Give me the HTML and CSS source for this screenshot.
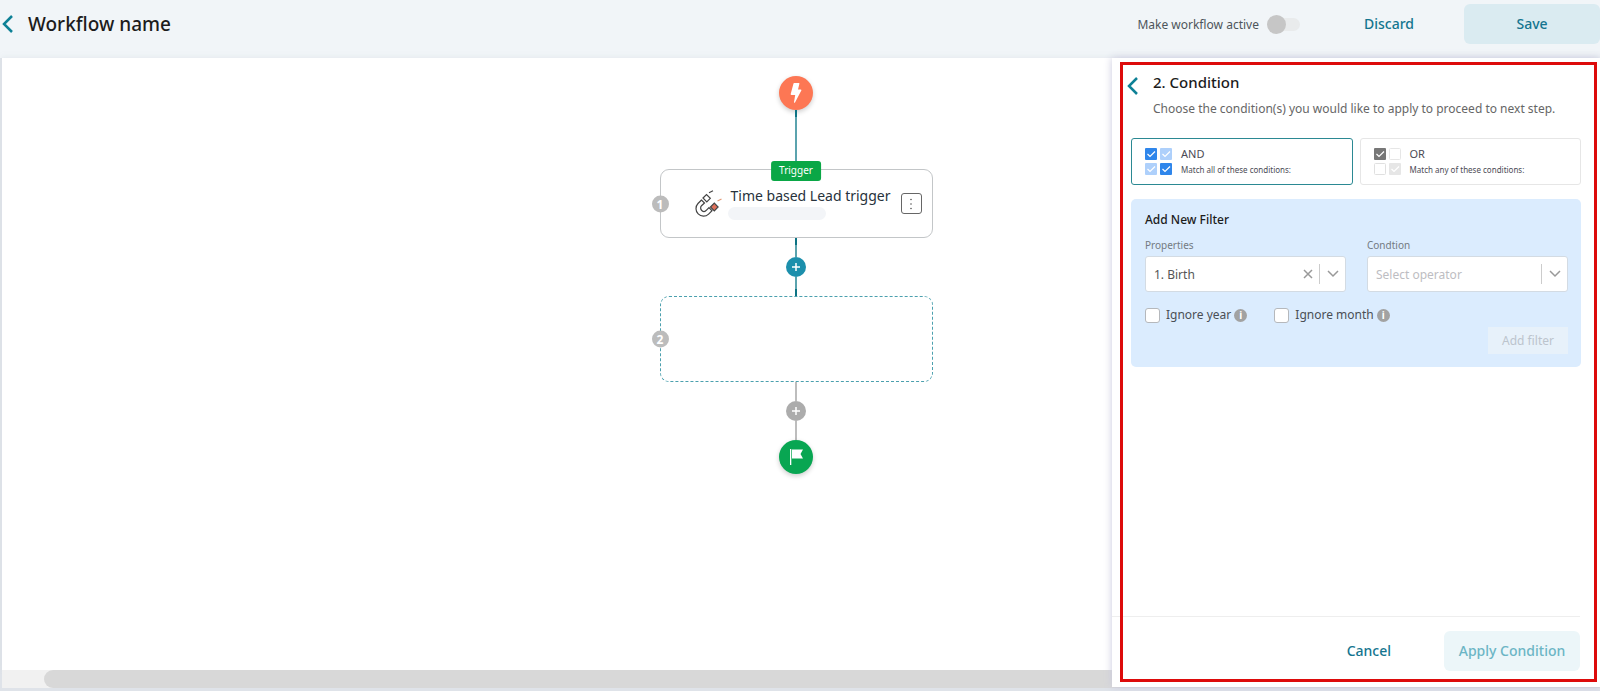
FILE: index.html
```html
<!DOCTYPE html>
<html lang="en">
<head>
<meta charset="utf-8">
<title>Workflow name</title>
<link rel="stylesheet" href="styles.css">
</head>
<body>
<header class="topbar">
  <button class="back" aria-label="Back"><svg width="12" height="18" viewBox="0 0 12 18"><path d="M10 1 2 9l8 8"/></svg></button>
  <h1 class="topbar-title">Workflow name</h1>
  <label class="switch">Make workflow active<input type="checkbox" role="switch"></label>
  <button class="btn btn-text discard">Discard</button>
  <button class="btn btn-soft save">Save</button>
</header>
<main class="workspace">
  <section class="canvas">
    <div class="flow">
      <div class="node node-start"><svg width="12" height="20" viewBox="0 0 12 20"><path fill="#fff" d="M3.500.5Q3.600 0 4.200 0h4.600q.8 0 .6.800L8 6.500h2.800q1 0 .5 1L5 19.500q-.7.800-1-.3L5.200 12H1.500q-.9 0-.8-1z"/></svg></div>
      <div class="line line-long"></div>
      <article class="card">
        <span class="tag">Trigger</span>
        <span class="step">1</span>
        <svg class="magnet" width="28" height="28" viewBox="0 0 28 28" fill="none" stroke="#444" stroke-width="1.200">
          <path d="M7.500 10 4 13.500a7.500 7.500 0 0 0 10.600 10.600l3.400-3.300-3-3.100-2.500 2.500a3.200 3.200 0 0 1-5-4.500l3-2.700z"/>
          <path d="m9 8 3.500-3.500 3.800 3.800-3.500 3.500z"/>
          <path fill="#e0705a" d="m16.500 17 3.800-3.800 3.800 3.800-3.800 3.800z"/>
          <path d="m15 2.800 4-2"/><path stroke="#e39a78" d="m23.500 11 4-2"/>
        </svg>
        <div class="card-text">
          <h2 class="card-title">Time based Lead trigger</h2>
          <div class="card-placeholder"></div>
        </div>
        <button class="kebab" aria-label="More"><svg width="4" height="14" viewBox="0 0 4 14" fill="#555"><circle cx="2" cy="2.500" r=".8"/><circle cx="2" cy="7" r=".8"/><circle cx="2" cy="11.500" r=".8"/></svg></button>
      </article>
      <div class="line"></div>
      <button class="plus" aria-label="Add step"><svg width="10" height="10" viewBox="0 0 10 10"><path d="M5 1v8M1 5h8"/></svg></button>
      <div class="line line-up"></div>
      <article class="card card-empty"><span class="step">2</span></article>
      <div class="line line-off"></div>
      <button class="plus plus-off" aria-label="Add step"><svg width="10" height="10" viewBox="0 0 10 10"><path d="M5 1v8M1 5h8"/></svg></button>
      <div class="line line-off"></div>
      <div class="node node-end"><svg width="14" height="16" viewBox="0 0 14 16"><path fill="#fff" d="M1 0h1.300v16H1zM3 .5h11L11.500 5 14 9.500H3z"/></svg></div>
    </div>
  </section>
  <div class="scrollbar"><div class="scroll-thumb"></div></div>

  <aside class="panel">
    <div class="panel-head">
      <button class="back" aria-label="Back"><svg width="12" height="18" viewBox="0 0 12 18"><path d="M10 1 2 9l8 8"/></svg></button>
      <div>
        <h2 class="panel-title">2. Condition</h2>
        <p class="panel-sub">Choose the condition(s) you would like to apply to proceed to next step.</p>
      </div>
    </div>
    <div class="modes">
      <button class="mode mode-on">
        <svg width="28" height="28" viewBox="0 0 28 28" fill="none">
          <rect width="12" height="12" rx="1" fill="#2f86eb"/><rect x="15" width="12" height="12" rx="1" fill="#aed0fb"/>
          <rect y="15" width="12" height="12" rx="1" fill="#aed0fb"/><rect x="15" y="15" width="12" height="12" rx="1" fill="#2f86eb"/>
          <path stroke="#fff" stroke-width="1.200" d="m2.500 6 2.500 2.500 5-5M17.500 6 20 8.500l5-5M2.500 21 5 23.500l5-5M17.500 21l2.500 2.500 5-5"/>
        </svg>
        <span class="mode-text"><span class="mode-name">AND</span><span class="mode-note">Match all of these conditions:</span></span>
      </button>
      <button class="mode">
        <svg width="28" height="28" viewBox="0 0 28 28" fill="none">
          <rect width="12" height="12" rx="1" fill="#777"/><rect x="15.500" y=".5" width="11" height="11" rx="1" stroke="#e6e6e6"/>
          <rect x=".5" y="15.500" width="11" height="11" rx="1" stroke="#e0e0e0"/><rect x="15" y="15" width="12" height="12" rx="1" fill="#e6e6e6"/>
          <path stroke="#fff" stroke-width="1.200" d="m2.500 6 2.500 2.500 5-5M17.500 21l2.500 2.500 5-5"/>
        </svg>
        <span class="mode-text"><span class="mode-name">OR</span><span class="mode-note">Match any of these conditions:</span></span>
      </button>
    </div>
    <section class="filter">
      <h3 class="filter-title">Add New Filter</h3>
      <div class="fields">
        <div class="field">
          <label class="field-label" for="prop">Properties</label>
          <div class="select">
            <select id="prop"><option>1. Birth</option></select>
            <button class="clear" aria-label="Clear"><svg width="10" height="10" viewBox="0 0 10 10"><path d="m1 1 8 8M9 1 1 9"/></svg></button>
            <span class="chevron"><svg width="12" height="8" viewBox="0 0 12 8"><path d="m1 1 5 5 5-5"/></svg></span>
          </div>
        </div>
        <div class="field">
          <label class="field-label" for="cond">Condtion</label>
          <div class="select select-blank">
            <select id="cond"><option>Select operator</option></select>
            <span class="chevron"><svg width="12" height="8" viewBox="0 0 12 8"><path d="m1 1 5 5 5-5"/></svg></span>
          </div>
        </div>
      </div>
      <div class="checks">
        <label class="check"><input type="checkbox">Ignore year<span class="info">i</span></label>
        <label class="check"><input type="checkbox">Ignore month<span class="info">i</span></label>
      </div>
      <button class="add-filter" disabled>Add filter</button>
    </section>
    <footer class="panel-foot">
      <button class="btn btn-text">Cancel</button>
      <button class="btn btn-soft apply" disabled>Apply Condition</button>
    </footer>
  </aside>
</main>
</body>
</html>
```
FILE: styles.css
```css
* { box-sizing: border-box; }
body {
  margin: 0;
  min-height: 100vh;
  display: flex;
  flex-direction: column;
  background: #f1f5f8;
  color: #222;
  font-family: "Noto Sans", sans-serif;
}
h1, h2, h3, p { margin: 0; font-weight: 400; }
button, input, select { font: inherit; color: inherit; margin: 0; }
button { border: 0; padding: 0; background: none; }
svg { display: block; }

.topbar { display: flex; align-items: center; height: 58px; padding-bottom: 10px; }
.back { flex: none; padding: 0 2px; }
.back path { fill: none; stroke: #0e8196; stroke-width: 2.500; }
.topbar-title { flex: 1; margin-left: 12px; font-size: 19px; font-weight: 500; line-height: 28px; color: #1c1c1c; }
.switch { display: flex; align-items: center; gap: 8px; font-size: 12px; color: #4e555b; }
.switch input {
  appearance: none;
  display: flex;
  align-items: center;
  width: 33px;
  height: 13px;
  border-radius: 7px;
  background: #e9ebec;
}
.switch input::before {
  content: "";
  width: 19px;
  height: 19px;
  flex: none;
  border-radius: 50%;
  background: #c6c6c6;
}
.btn { height: 40px; padding-bottom: 2px; border-radius: 6px; font-size: 14px; font-weight: 500; color: #14758f; }
.btn-soft { background: #daebf1; }
.discard { margin-left: 52px; padding: 0 12px 2px; }
.save { width: 136px; margin-left: 38px; }

.workspace {
  position: relative;
  flex: 1;
  display: flex;
  flex-direction: column;
  padding: 0 0 3px 2px;
  background: #dfe3e9;
}
.canvas { flex: 1; padding: 18px 10px 0 0; background: #fff; box-shadow: 0 -1px 4px #d9dfe580; }
.flow { display: flex; flex-direction: column; align-items: center; }
.node {
  display: grid;
  place-items: center;
  width: 34px;
  height: 34px;
  border-radius: 50%;
  box-shadow: 0 2px 5px #0003;
}
.node-start { background: #fd7754; }
.node-end { background: #08a652; }
.line { width: 2px; height: 19px; background: linear-gradient(#0c7384 7px, #5ba3ae 7px); }
.line-up { background: linear-gradient(#5ba3ae 12px, #0c7384 12px); }
.line-long { height: 59px; }
.line-off { background: #bdbdbd; }
.card {
  position: relative;
  display: flex;
  align-items: center;
  width: 273px;
  height: 69px;
  padding: 0 10px 0 33px;
  border: 1px solid #c3c6c8;
  border-radius: 9px;
  background: #fff;
}
.card-empty { height: 86px; border: 1px dashed #4ba0ae; }
.tag {
  position: absolute;
  top: -9px;
  left: 50%;
  transform: translateX(-50%);
  padding: 0 8px 1px;
  border-radius: 3px;
  background: #0aa746;
  color: #fff;
  font-size: 10px;
  line-height: 19px;
}
.step {
  position: absolute;
  left: -9px;
  top: 50%;
  transform: translateY(-50%);
  width: 17px;
  height: 17px;
  border-radius: 50%;
  background: #bcbcbc;
  color: #fff;
  font-size: 12px;
  font-weight: 700;
  line-height: 17px;
  text-align: center;
}
.card-text { flex: 1; margin-left: 6px; padding-bottom: 3px; }
.card-title { margin-left: 3px; font-size: 14px; line-height: 22px; white-space: nowrap; color: #27323c; }
.card-placeholder { width: 98px; height: 13px; border-radius: 7px; background: #f3f5f8; }
.kebab {
  display: grid;
  place-items: center;
  width: 21px;
  height: 21px;
  border: 1px solid #666;
  border-radius: 3px;
}
.plus { display: grid; place-items: center; width: 20px; height: 20px; border-radius: 50%; background: #1c8fac; }
.plus-off { background: #acacac; }
.plus path { stroke: #fff; stroke-width: 1.500; }
.scrollbar { height: 18px; background: #f1f1f1; }
.scroll-thumb { height: 18px; margin-left: 42px; border-radius: 9px 0 0 9px; background: #d8d8d8; }

.panel {
  position: absolute;
  top: 0;
  right: 0;
  bottom: 4px;
  width: 488px;
  display: flex;
  flex-direction: column;
  padding: 13px 19px 0;
  background: #fff;
  box-shadow: 0 0 8px #c9c9dd;
}
.panel::after {
  content: "";
  position: absolute;
  inset: 4px 3px 5px 8px;
  border: 3px solid #dd0b0b;
  pointer-events: none;
}
.panel-head { display: flex; gap: 12px; margin-left: -6px; }
.panel-head .back { align-self: flex-start; margin-top: 6px; }
.panel-title { font-size: 15px; font-weight: 500; line-height: 22px; color: #1c1c1c; }
.panel-sub { margin-top: 6px; font-size: 12px; line-height: 20px; color: #666; }
.modes { display: flex; gap: 7px; margin-top: 19px; }
.mode {
  flex: 1;
  display: flex;
  align-items: center;
  gap: 8px;
  height: 47px;
  padding: 0 13px;
  border: 1px solid #e6e6e6;
  border-radius: 3px;
  text-align: left;
}
.mode-on { border-color: #2b8993; }
.mode-text { display: flex; flex-direction: column; color: #4b4b55; }
.mode-name { font-size: 11px; line-height: 17px; }
.mode-note { font-size: 8px; line-height: 16px; }
.filter {
  display: flex;
  flex-direction: column;
  margin-top: 14px;
  padding: 11px 13px 13px 14px;
  border-radius: 5px;
  background: #dbecfe;
}
.filter-title { font-size: 12px; font-weight: 500; line-height: 20px; color: #1c1c1c; }
.fields { display: flex; gap: 21px; margin-top: 7px; }
.field { flex: 1; min-width: 0; }
.field-label { display: block; font-size: 10px; line-height: 16px; color: #737a82; }
.select {
  display: flex;
  align-items: center;
  height: 36px;
  margin-top: 3px;
  border: 1px solid #d3dbe3;
  border-radius: 3px;
  background: #fff;
}
.select select {
  flex: 1;
  min-width: 0;
  appearance: none;
  border: 0;
  padding: 0 8px;
  background: none;
  font-size: 12px;
  color: #555;
}
.select-blank select { color: #bdbdc2; }
.select path { fill: none; stroke: #999; stroke-width: 1.500; }
.clear { padding: 0 6px; }
.chevron { display: flex; align-items: center; height: 20px; padding: 0 6px 0 7px; border-left: 1px solid #ccc; }
.checks { display: flex; gap: 27px; margin-top: 13px; }
.check { display: flex; align-items: center; font-size: 12px; line-height: 20px; color: #4a4f55; }
.check input {
  appearance: none;
  width: 15px;
  height: 15px;
  margin-right: 6px;
  border: 1px solid #b5b8bc;
  border-radius: 3px;
  background: #fff;
}
.info {
  width: 13px;
  height: 13px;
  margin-left: 3px;
  border-radius: 50%;
  background: #a2a2a2;
  color: #fff;
  font-size: 10px;
  font-weight: 700;
  line-height: 13px;
  text-align: center;
}
.add-filter {
  align-self: flex-end;
  width: 80px;
  height: 27px;
  margin-top: 2px;
  background: #e7f1fa;
  color: #bcc4cd;
  font-size: 12px;
}
.panel-foot {
  display: flex;
  justify-content: flex-end;
  align-items: center;
  gap: 53px;
  height: 71px;
  padding-bottom: 2px;
  margin: auto 1px 0 -19px;
  border-top: 1px solid #eee;
}
.apply { width: 136px; background: #ecf6f9; color: #6bb5c5; }
```
